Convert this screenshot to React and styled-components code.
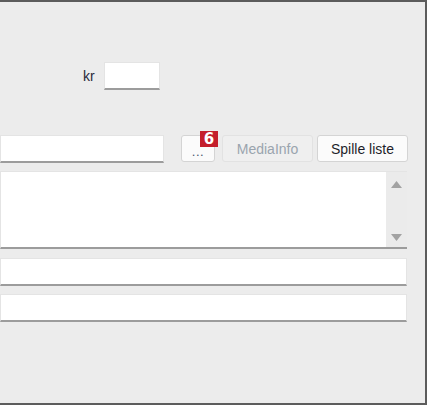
import React from "react";
import styled, { createGlobalStyle } from "styled-components";

const GlobalStyle = createGlobalStyle`
  html, body {
    margin: 0;
    padding: 0;
    background: #ffffff;
  }
  body {
    font-family: "Liberation Sans", Arial, sans-serif;
  }
`;

const Frame = styled.div`
  box-sizing: border-box;
  width: 427px;
  height: 405px;
  background: #ececec;
  border: 2px solid #5c5c5c;
  border-left: none;
  display: flex;
  flex-direction: column;
  overflow: hidden;
`;

const KrRow = styled.div`
  display: flex;
  align-items: center;
  margin-top: 60px;
  padding-left: 83px;
  height: 28px;
`;

const Label = styled.span`
  font-size: 14px;
  color: #2a2a3a;
  margin-right: 9px;
`;

const Field = styled.div`
  box-sizing: border-box;
  width: ${(p) => p.$w || 407}px;
  height: ${(p) => p.$h || 28}px;
  margin-top: ${(p) => p.$mt || 0}px;
  background: #ffffff;
  border: 1px solid #e4e4e4;
  border-bottom: 2px solid #9c9c9c;
  flex-shrink: 0;
`;

const ToolRow = styled.div`
  display: flex;
  align-items: stretch;
  margin-top: 45px;
  height: 28px;
`;

const Button = styled.div`
  position: relative;
  box-sizing: border-box;
  width: ${(p) => p.$w}px;
  height: 27px;
  margin-left: ${(p) => p.$ml}px;
  display: flex;
  align-items: center;
  justify-content: center;
  font-size: 14px;
  border-radius: 3px;
  background: ${(p) => (p.$disabled ? "#efefef" : "#fbfbfb")};
  border: 1px solid ${(p) => (p.$disabled ? "#e2e2e2" : "#d4d4d4")};
  color: ${(p) => (p.$disabled ? "#9aa4ae" : "#1e1e2a")};
`;

const Dots = styled.span`
  font-size: 13px;
  color: #4a5670;
  letter-spacing: 0.5px;
  margin-top: 5px;
`;

const Badge = styled.span`
  position: absolute;
  top: -5px;
  right: -4px;
  width: 18px;
  height: 16px;
  background: #c41e2c;
  color: #ffffff;
  font-family: "DejaVu Sans", sans-serif;
  font-weight: bold;
  font-size: 15px;
  line-height: 16px;
  text-align: center;
`;

const TextArea = styled(Field)`
  display: flex;
  justify-content: flex-end;
  border-right: none;
`;

const ScrollBar = styled.div`
  width: 21px;
  background: #ebebeb;
  display: flex;
  flex-direction: column;
  align-items: center;
  justify-content: space-between;
  padding: 9px 0 6px;
`;

const Arrow = ({ down }) => (
  <svg width="11" height="7" viewBox="0 0 11 7">
    <path d={down ? "M0 0 H11 L5.5 7 Z" : "M0 7 H11 L5.5 0 Z"} fill="#a2a2a2" />
  </svg>
);

export default function App() {
  return (
    <>
      <GlobalStyle />
      <Frame>
        <KrRow>
          <Label>kr</Label>
          <Field $w={56} $h={28} />
        </KrRow>
        <ToolRow>
          <Field $w={164} $h={28} />
          <Button $w={34} $ml={17}>
            <Dots>...</Dots>
            <Badge>6</Badge>
          </Button>
          <Button $w={91} $ml={7} $disabled>
            MediaInfo
          </Button>
          <Button $w={91} $ml={4}>
            Spille liste
          </Button>
        </ToolRow>
        <TextArea $h={78} $mt={8}>
          <ScrollBar>
            <Arrow />
            <Arrow down />
          </ScrollBar>
        </TextArea>
        <Field $mt={9} />
        <Field $mt={8} />
      </Frame>
    </>
  );
}
